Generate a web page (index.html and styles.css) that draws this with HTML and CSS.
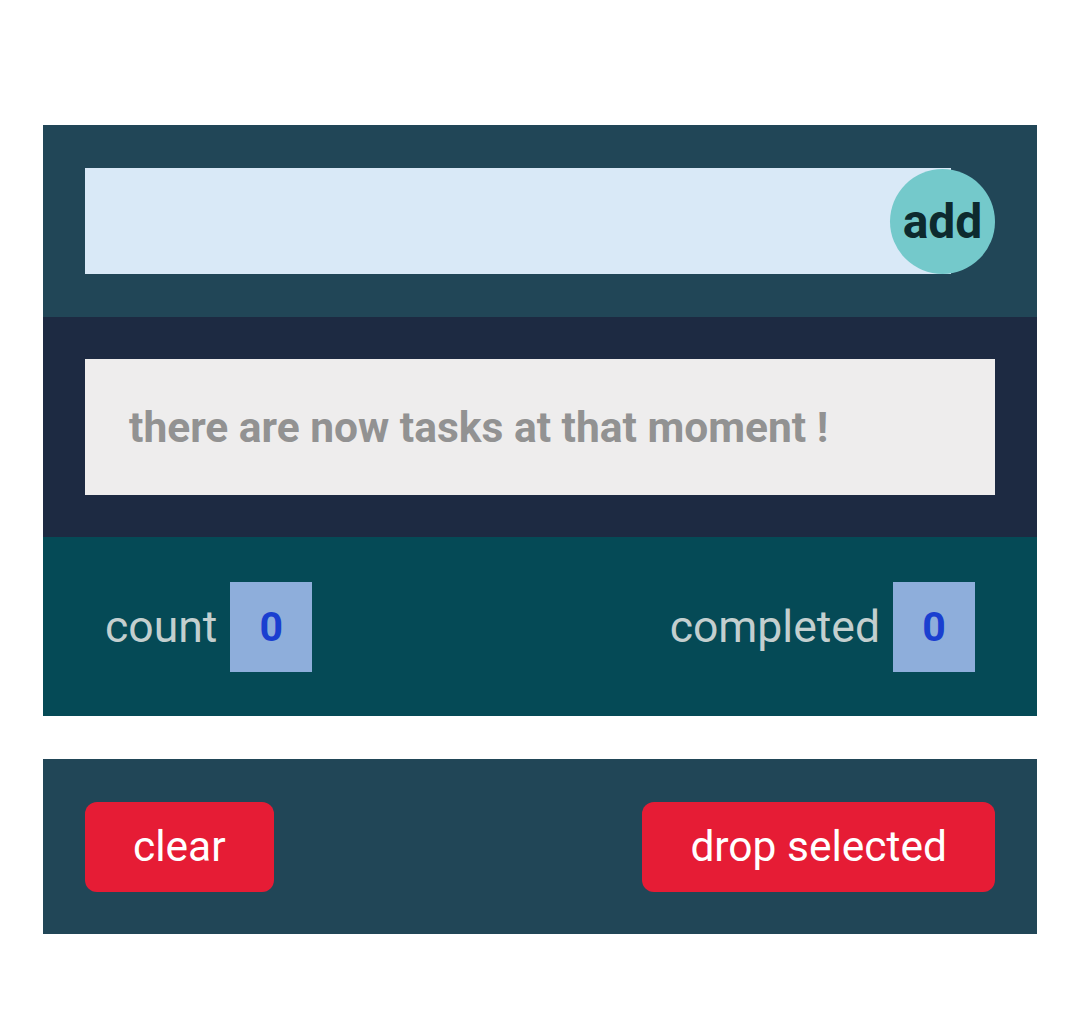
FILE: index.html
```html
<!DOCTYPE html>
<html>
<head>
<meta charset="utf-8">
<link rel="stylesheet" href="styles.css">
</head>
<body>
<div class="app">
  <section class="card">
    <div class="header">
      <input class="task-input" type="text">
      <button class="add-btn">add</button>
    </div>
    <div class="list">
      <div class="empty">there are now tasks at that moment !</div>
    </div>
    <div class="stats">
      <div class="stat"><span class="stat-label">count</span><span class="badge">0</span></div>
      <div class="stat"><span class="stat-label">completed</span><span class="badge">0</span></div>
    </div>
  </section>
  <section class="actions">
    <button class="danger">clear</button>
    <button class="danger">drop selected</button>
  </section>
</div>
</body>
</html>
```

FILE: styles.css
```css
* { box-sizing: border-box; }
html, body { margin: 0; padding: 0; background: #ffffff; }
body { font-family: Roboto, "Liberation Sans", sans-serif; }

.app {
  width: 994px;
  margin: 125px 0 0 43px;
}

.header {
  background: #214657;
  padding: 42px;
  display: flex;
  align-items: center;
  height: 192px;
}

.task-input {
  flex: 1;
  height: 106px;
  border: none;
  outline: none;
  background: #d9e9f7;
  margin: 0;
  padding: 0 20px;
  font-size: 30px;
  font-family: inherit;
}

.add-btn {
  width: 105px;
  height: 105px;
  border-radius: 50%;
  border: none;
  background: #74c9cb;
  color: #0d2a2e;
  font-family: inherit;
  font-weight: 700;
  font-size: 48px;
  margin-left: -61px;
  padding: 0;
  position: relative;
}

.list {
  background: #1d2a42;
  padding: 42px;
  height: 220px;
}

.empty {
  background: #eeeded;
  height: 136px;
  display: flex;
  align-items: center;
  padding-left: 44px;
  color: #929292;
  font-weight: 700;
  font-size: 42.5px;
}

.stats {
  background: #054a56;
  height: 179px;
  padding: 0 62px 0 62px;
  display: flex;
  align-items: center;
  justify-content: space-between;
}

.stat {
  display: flex;
  align-items: center;
  gap: 13px;
}

.stat-label {
  color: #c3cfcf;
  font-size: 44.5px;
}

.badge {
  width: 82px;
  height: 90px;
  background: #8eaedb;
  color: #1a3fd0;
  font-weight: 700;
  font-size: 41px;
  display: flex;
  align-items: center;
  justify-content: center;
}

.actions {
  margin-top: 43px;
  background: #214657;
  height: 175px;
  padding: 0 42px;
  display: flex;
  align-items: center;
  justify-content: space-between;
}

.danger {
  height: 90px;
  padding: 0 48px;
  border: none;
  border-radius: 12px;
  background: #e61c35;
  color: #ffffff;
  font-family: inherit;
  font-size: 42.5px;
}
```
